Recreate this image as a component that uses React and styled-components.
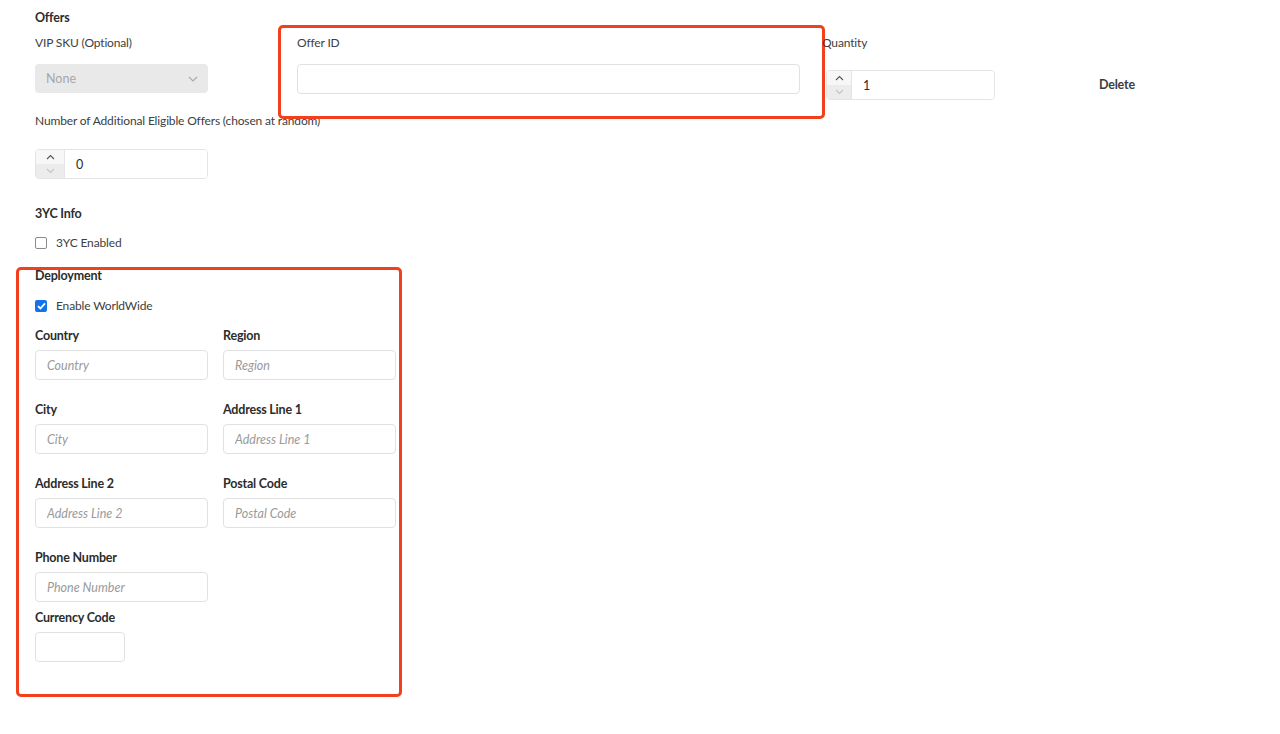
import React from "react";
import styled, { createGlobalStyle } from "styled-components";

const Global = createGlobalStyle`
  html, body { margin: 0; padding: 0; background: #fff; }
  body { font-family: Lato, "Open Sans", sans-serif; color: #2c2c2c; }
  * { box-sizing: border-box; }
`;

const Page = styled.div`
  width: 1280px;
  min-height: 734px;
  padding: 10px 0 0 35px;
  display: flex;
  flex-direction: column;
`;

const SectionTitle = styled.div`
  font-size: 12.5px;
  font-weight: 700;
  letter-spacing: -0.2px;
  color: #2c2c2c;
  line-height: 16px;
  margin-top: ${(p) => p.$mt || 0}px;
`;

const OfferRow = styled.div`
  display: flex;
  align-items: flex-start;
  margin-top: 9px;
`;

const Field = styled.div`
  display: flex;
  flex-direction: column;
  width: ${(p) => p.$w}px;
  margin-right: ${(p) => p.$mr || 0}px;
  position: relative;
`;

const Label = styled.label`
  font-size: 12px;
  letter-spacing: -0.15px;
  color: #404040;
  line-height: 16px;
  height: 16px;
  white-space: nowrap;
  margin-top: ${(p) => p.$mt || 0}px;
`;

const BoldLabel = styled.label`
  font-size: 12.5px;
  font-weight: 700;
  letter-spacing: -0.2px;
  color: #2c2c2c;
  line-height: 16px;
  height: 16px;
  white-space: nowrap;
`;

const Select = styled.div`
  margin-top: ${(p) => p.$mt}px;
  height: 29px;
  border-radius: 4px;
  background: #e9e9e9;
  display: flex;
  align-items: center;
  justify-content: space-between;
  padding: 0 10px 0 11px;
  font-size: 12.5px;
  color: #a7a7a7;
`;

const TextInput = styled.input`
  margin-top: ${(p) => p.$mt || 0}px;
  height: 30px;
  width: ${(p) => (p.$w ? `${p.$w}px` : "100%")};
  border: 1px solid #e1e1e1;
  border-radius: 4px;
  background: #fff;
  padding: 0 11px;
  font-family: inherit;
  font-size: 12.5px;
  color: #2c2c2c;
  outline: none;
  &::placeholder {
    color: #9a9a9a;
    font-style: italic;
  }
`;

const Stepper = styled.div`
  margin-top: ${(p) => p.$mt}px;
  margin-left: ${(p) => p.$ml || 0}px;
  height: 30px;
  width: ${(p) => p.$w}px;
  display: flex;
  border: 1px solid #e4e4e4;
  border-radius: 4px;
  overflow: hidden;
`;

const StepButtons = styled.div`
  width: ${(p) => p.$w}px;
  display: flex;
  flex-direction: column;
  border-right: 1px solid #e4e4e4;
`;

const StepHalf = styled.div`
  flex: 1;
  display: flex;
  align-items: center;
  justify-content: center;
  background: ${(p) => (p.$down ? "#ececec" : "#f7f7f7")};
`;

const StepValue = styled.div`
  flex: 1;
  display: flex;
  align-items: center;
  padding-left: 11px;
  font-size: 12.5px;
  color: #2c2c2c;
  background: #fff;
`;

const DeleteButton = styled.button`
  margin: 42px 0 0 104px;
  border: none;
  background: none;
  padding: 0;
  font-family: inherit;
  font-size: 12.5px;
  font-weight: 700;
  letter-spacing: -0.2px;
  color: #3d3d3d;
  line-height: 16px;
`;

const CheckRow = styled.label`
  display: flex;
  align-items: center;
  gap: 9px;
  margin-top: ${(p) => p.$mt}px;
  font-size: 12px;
  letter-spacing: -0.15px;
  color: #404040;
  line-height: 16px;
`;

const Box = styled.span`
  width: 12px;
  height: 12px;
  border-radius: 2px;
  border: ${(p) => (p.$checked ? "none" : "1.5px solid #8a8a8a")};
  background: ${(p) => (p.$checked ? "#1473e6" : "#fff")};
  display: flex;
  align-items: center;
  justify-content: center;
`;

const Deployment = styled.div`
  position: relative;
  margin-top: 17px;
  width: 361px;
  display: flex;
  flex-direction: column;
`;

const Grid = styled.div`
  display: grid;
  grid-template-columns: 173px 173px;
  column-gap: 15px;
  row-gap: 22px;
  margin-top: 14px;
`;

const GridField = styled.div`
  display: flex;
  flex-direction: column;
  gap: 6px;
`;

const Stack = styled.div`
  display: flex;
  flex-direction: column;
  gap: 6px;
  margin-top: ${(p) => p.$mt}px;
  width: ${(p) => p.$w}px;
`;

const Annotation = styled.div`
  position: absolute;
  left: ${(p) => p.$l}px;
  top: ${(p) => p.$t}px;
  width: ${(p) => p.$w}px;
  height: ${(p) => p.$h}px;
  border: 3px solid #f2401f;
  border-radius: 5px;
  pointer-events: none;
`;

const Chevron = ({ up, color }) => (
  <svg width="9" height="6" viewBox="0 0 9 6">
    <path
      d={up ? "M1 5 L4.5 1.5 L8 5" : "M1 1 L4.5 4.5 L8 1"}
      fill="none"
      stroke={color}
      strokeWidth="1.1"
    />
  </svg>
);

const NumberField = ({ value, w, mt, ml, bw = 29 }) => (
  <Stepper $w={w} $mt={mt} $ml={ml}>
    <StepButtons $w={bw}>
      <StepHalf>
        <Chevron up color="#555" />
      </StepHalf>
      <StepHalf $down>
        <Chevron color="#c4c4c4" />
      </StepHalf>
    </StepButtons>
    <StepValue>{value}</StepValue>
  </Stepper>
);

const Check = () => (
  <svg width="9" height="8" viewBox="0 0 9 8">
    <path d="M1 4.2 L3.4 6.5 L8 1.3" fill="none" stroke="#fff" strokeWidth="1.8" />
  </svg>
);

const fields = [
  ["Country", "Region"],
  ["City", "Address Line 1"],
  ["Address Line 2", "Postal Code"],
];

export default function App() {
  return (
    <Page>
      <Global />
      <SectionTitle>Offers</SectionTitle>
      <OfferRow>
        <Field $w={173} $mr={89}>
          <Label>VIP SKU (Optional)</Label>
          <Select $mt={13}>
            <span>None</span>
            <svg width="10" height="6" viewBox="0 0 10 6">
              <path d="M1 1 L5 5 L9 1" fill="none" stroke="#a9a9a9" strokeWidth="1.1" />
            </svg>
          </Select>
        </Field>
        <Field $w={503} $mr={22}>
          <Label>Offer ID</Label>
          <TextInput $mt={13} />
          <Annotation $l={-19} $t={-10} $w={547} $h={94} />
        </Field>
        <Field $w={173}>
          <Label>Quantity</Label>
          <NumberField value="1" w={169} mt={19} ml={4} bw={25} />
        </Field>
        <DeleteButton>Delete</DeleteButton>
      </OfferRow>
      <Label $mt={13}>Number of Additional Eligible Offers (chosen at random)</Label>
      <NumberField value="0" w={173} mt={20} />
      <SectionTitle $mt={27}>3YC Info</SectionTitle>
      <CheckRow $mt={13}>
        <Box />
        3YC Enabled
      </CheckRow>
      <Deployment>
        <Annotation $l={-19} $t={-1} $w={386} $h={430} />
        <SectionTitle>Deployment</SectionTitle>
        <CheckRow $mt={14}>
          <Box $checked>
            <Check />
          </Box>
          Enable WorldWide
        </CheckRow>
        <Grid>
          {fields.flat().map((f) => (
            <GridField key={f}>
              <BoldLabel>{f}</BoldLabel>
              <TextInput placeholder={f} />
            </GridField>
          ))}
        </Grid>
        <Stack $mt={22} $w={173}>
          <BoldLabel>Phone Number</BoldLabel>
          <TextInput placeholder="Phone Number" />
        </Stack>
        <Stack $mt={8} $w={90}>
          <BoldLabel>Currency Code</BoldLabel>
          <TextInput />
        </Stack>
      </Deployment>
    </Page>
  );
}
